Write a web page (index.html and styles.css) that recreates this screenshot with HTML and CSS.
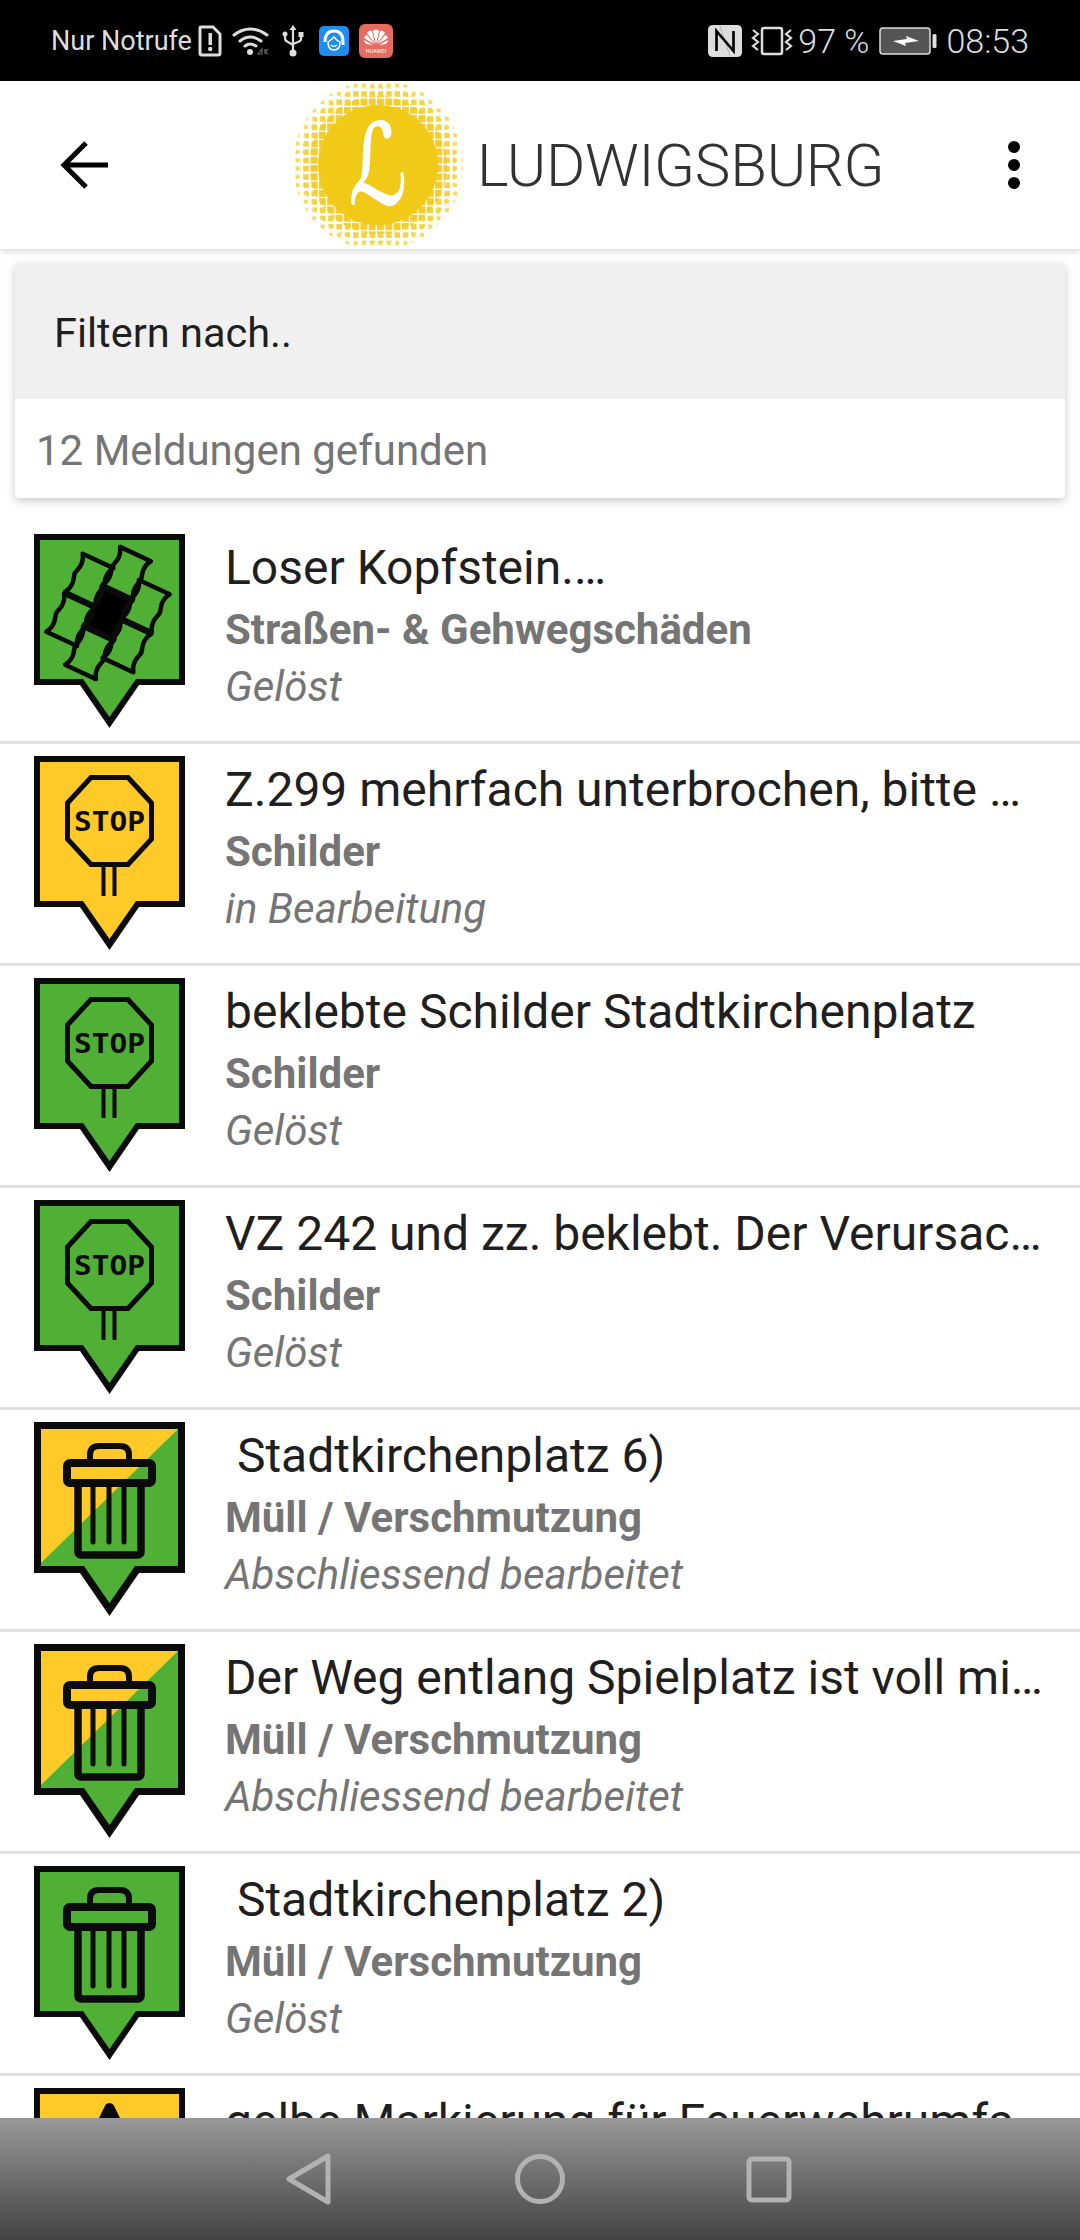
FILE: index.html
```html
<!DOCTYPE html>
<html lang="de">
<head>
    <meta charset="UTF-8">
    <meta name="viewport" content="width=device-width, initial-scale=1.0">
    <title>Meldungen</title>
    <link rel="stylesheet" href="styles.css">
</head>
<body>
    <!-- Pin-Symbole -->
    <svg class="defs" aria-hidden="true">
        <defs>
            <symbol id="pin-green" viewBox="0 0 151 194">
                <path d="M0 0H151V151H105L75.5 194L46 151H0Z" fill="#0b0b0b"/>
                <path d="M6 6H145V145H102L75.5 183L49 145H6Z" fill="#4fb035"/>
            </symbol>
            <symbol id="pin-yellow" viewBox="0 0 151 194">
                <path d="M0 0H151V151H105L75.5 194L46 151H0Z" fill="#0b0b0b"/>
                <path d="M6 6H145V145H102L75.5 183L49 145H6Z" fill="#ffca28"/>
            </symbol>
            <symbol id="pin-split" viewBox="0 0 151 194">
                <path d="M0 0H151V151H105L75.5 194L46 151H0Z" fill="#0b0b0b"/>
                <path d="M7 7H144V144H101L75.5 181L50 144H7Z" fill="#4fb035"/>
                <path d="M7 7H144L7 141Z" fill="#ffca28"/>
            </symbol>
            <symbol id="stop" viewBox="0 0 151 194">
                <path d="M57 21.500H94L117.500 47V83L94 108.500H57L33.500 83V47Z" fill="none" stroke="#0b0b0b" stroke-width="5"/>
                <text x="75.500" y="75" text-anchor="middle" font-family="DejaVu Sans Mono" font-weight="700" font-size="27" textLength="71" lengthAdjust="spacingAndGlyphs" fill="#0b0b0b">STOP</text>
                <path d="M69.500 110V140M80.500 110V140" fill="none" stroke="#0b0b0b" stroke-width="4"/>
            </symbol>
            <symbol id="trash" viewBox="0 0 151 194">
                <g fill="none" stroke="#0b0b0b">
                    <path d="M56 42V33Q56 24 65 24H86Q95 24 95 33V42" stroke-width="6"/>
                    <rect x="33" y="41" width="85" height="20" rx="3" stroke-width="8"/>
                    <rect x="44" y="61" width="63" height="72" rx="3" stroke-width="7.500"/>
                    <path d="M59 64V120M75 64V120M90 64V120" stroke-width="5" stroke-linecap="round"/>
                </g>
            </symbol>
            <path id="stone" d="M-17 -21H17Q13 -15 14 -8Q15 -4 16 0Q15 4 14 8Q13 15 17 21H-17Q-13 15 -14 8Q-15 4 -16 0Q-15 -4 -14 -8Q-13 -15 -17 -21Z"/>
            <symbol id="cobble" viewBox="0 0 151 194">
                <g transform="translate(74 79) rotate(25)" fill="none" stroke="#0b0b0b" stroke-width="4.500" stroke-linejoin="round">
                    <use href="#stone" x="0" y="-44"/>
                    <use href="#stone" x="0" y="44"/>
                    <use href="#stone" x="-31" y="-22"/>
                    <use href="#stone" x="-31" y="22"/>
                    <use href="#stone" x="31" y="-22"/>
                    <use href="#stone" x="31" y="22"/>
                    <use href="#stone" fill="#000"/>
                </g>
            </symbol>
            <pattern id="dotsLarge" width="8.300" height="8.300" patternUnits="userSpaceOnUse" x="1" y="1">
                <rect width="7" height="7" fill="#f2cd2e"/>
            </pattern>
            <pattern id="dotsMedium" width="8.300" height="8.300" patternUnits="userSpaceOnUse" x="1" y="1">
                <rect x="1" y="1" width="5.500" height="5.500" fill="#f3d445"/>
            </pattern>
            <pattern id="dotsSmall" width="8.300" height="8.300" patternUnits="userSpaceOnUse" x="1" y="1">
                <rect x="1.500" y="1.500" width="4" height="4" fill="#f5da60"/>
            </pattern>
        </defs>
    </svg>

    <!-- Statusleiste -->
    <div class="status-bar">
        <div class="status-group">
            <span class="carrier">Nur Notrufe</span>
            <svg class="ic-sim" width="24" height="32" viewBox="0 0 24 32">
                <path d="M3 2H15L22 9V28Q22 30 20 30H4Q2 30 2 28V3Q2 2 3 2Z" fill="none" stroke="#ddd" stroke-width="3"/>
                <rect x="10.500" y="8" width="3.500" height="12" fill="#ddd"/>
                <circle cx="12.200" cy="24" r="2.200" fill="#ddd"/>
            </svg>
            <svg class="ic-wifi" width="38" height="30" viewBox="0 0 38 30">
                <g fill="none" stroke="#ddd" stroke-width="3" stroke-linecap="round">
                    <path d="M2 9Q18 -3 35 9"/>
                    <path d="M8 15Q18 7 29 15"/>
                    <path d="M13 20Q18 16 24 20"/>
                </g>
                <circle cx="18" cy="26" r="3" fill="#ddd"/>
                <path d="M26 28L30 23V28ZM33 23V28M33 26L36 23M33 26L36 28" fill="none" stroke="#666" stroke-width="1.200"/>
            </svg>
            <svg class="ic-usb" width="22" height="32" viewBox="0 0 22 32">
                <g fill="none" stroke="#ddd" stroke-width="2.200">
                    <path d="M11 4V27"/>
                    <path d="M3 10V13Q3 16 6 17L11 20"/>
                    <path d="M19 11V14Q19 16 16 17L11 19"/>
                </g>
                <path d="M11 0L14.500 5H7.500Z" fill="#ddd"/>
                <circle cx="11" cy="28" r="3.500" fill="#ddd"/>
                <circle cx="3" cy="9" r="2.500" fill="#ddd"/>
                <rect x="16.500" y="7" width="5" height="5" fill="#ddd"/>
            </svg>
            <svg class="ic-app" width="30" height="30" viewBox="0 0 30 30">
                <rect width="30" height="30" rx="5" fill="#1e8df2"/>
                <path d="M6 16Q6 5 15 5T24 16V19" fill="none" stroke="#fff" stroke-width="3"/>
                <path d="M9 16Q12 14 15 11Q18 15 21 16Q21 24 15 24T9 16Z" fill="#1e8df2" stroke="#fff" stroke-width="1.500"/>
                <path d="M12 19Q15 22 18 19" fill="none" stroke="#fff" stroke-width="1.200"/>
            </svg>
            <svg class="ic-huawei" width="34" height="34" viewBox="0 0 34 34">
                <rect width="34" height="34" rx="6" fill="#e66b60"/>
                <g fill="#fff">
                    <path d="M17 20L14 7Q17 4 20 7Z"/>
                    <path d="M16 20L8 9Q10 6 13 7Z"/>
                    <path d="M18 20L26 9Q24 6 21 7Z"/>
                    <path d="M15 20L5 14Q6 11 8 11Z"/>
                    <path d="M19 20L29 14Q28 11 26 11Z"/>
                    <path d="M14 21L7 20Q5 18 5 16Z"/>
                    <path d="M20 21L27 20Q29 18 29 16Z"/>
                </g>
                <text x="17" y="29" text-anchor="middle" font-family="Roboto" font-size="5.500" fill="#fff">HUAWEI</text>
            </svg>
        </div>
        <div class="status-group">
            <svg class="ic-nfc" width="34" height="32" viewBox="0 0 32 32" preserveAspectRatio="none">
                <path d="M5 0H11L21 32H5Q0 32 0 27V5Q0 0 5 0Z" fill="#ddd"/>
                <path d="M27 32H21L11 0H27Q32 0 32 5V27Q32 32 27 32Z" fill="#ddd"/>
                <path d="M8 26V6L24 26V6" fill="none" stroke="#000" stroke-width="2.500"/>
            </svg>
            <svg class="ic-vibrate" width="42" height="30" viewBox="0 0 42 30">
                <rect x="11" y="2" width="20" height="26" rx="2" fill="none" stroke="#ddd" stroke-width="2.500"/>
                <path d="M2 4L7 8L2 12L7 16L2 20L7 24M40 4L35 8L40 12L35 16L40 20L35 24" fill="none" stroke="#ddd" stroke-width="2.200"/>
            </svg>
            <span class="status-text percent">97 %</span>
            <svg class="ic-battery" width="58" height="28" viewBox="0 0 58 28">
                <rect x="1" y="1" width="50" height="26" rx="3" fill="#555" stroke="#ddd" stroke-width="1.500"/>
                <path d="M14 14L28 12L27 9L40 14L26 16L27 19Z" fill="#fff"/>
                <rect x="53.500" y="7" width="4" height="14" rx="1.500" fill="#ddd"/>
            </svg>
            <span class="status-text">08:53</span>
        </div>
    </div>

    <!-- Kopfzeile -->
    <header class="app-bar">
        <svg class="back" width="48" height="48" viewBox="0 0 48 48">
            <path d="M48 24H4M26 2L4 24L26 46" fill="none" stroke="#000" stroke-width="5"/>
        </svg>
        <div class="logo">
            <svg class="logo-mark" width="170" height="168" viewBox="0 0 170 168">
                <circle cx="85" cy="84" r="85" fill="url(#dotsSmall)"/>
                <circle cx="85" cy="84" r="78" fill="url(#dotsMedium)"/>
                <circle cx="85" cy="84" r="69" fill="url(#dotsLarge)"/>
                <circle cx="85" cy="84" r="60" fill="#f1ca17"/>
                <text transform="translate(85 123) scale(0.72 1)" text-anchor="middle" font-family="DejaVu Sans" font-size="112" fill="#fff" stroke="#fff" stroke-width="1.500">ℒ</text>
            </svg>
            <span class="logo-text">LUDWIGSBURG</span>
        </div>
        <div class="menu">
            <span class="menu-dot"></span>
            <span class="menu-dot"></span>
            <span class="menu-dot"></span>
        </div>
    </header>

    <main class="content">
        <section class="filter-card">
            <div class="filter-field">Filtern nach..</div>
            <div class="result-count">12 Meldungen gefunden</div>
        </section>

        <ul class="report-list">
            <li class="report">
                <svg class="pin" width="151" height="194"><use href="#pin-green"/><use href="#cobble"/></svg>
                <div class="report-text">
                    <div class="report-title">Loser Kopfstein.…</div>
                    <div class="report-category">Straßen- &amp; Gehwegschäden</div>
                    <div class="report-state">Gelöst</div>
                </div>
            </li>
            <li class="report">
                <svg class="pin" width="151" height="194"><use href="#pin-yellow"/><use href="#stop"/></svg>
                <div class="report-text">
                    <div class="report-title">Z.299 mehrfach unterbrochen, bitte Markierung erneuern</div>
                    <div class="report-category">Schilder</div>
                    <div class="report-state">in Bearbeitung</div>
                </div>
            </li>
            <li class="report">
                <svg class="pin" width="151" height="194"><use href="#pin-green"/><use href="#stop"/></svg>
                <div class="report-text">
                    <div class="report-title">beklebte Schilder Stadtkirchenplatz</div>
                    <div class="report-category">Schilder</div>
                    <div class="report-state">Gelöst</div>
                </div>
            </li>
            <li class="report">
                <svg class="pin" width="151" height="194"><use href="#pin-green"/><use href="#stop"/></svg>
                <div class="report-text">
                    <div class="report-title">VZ 242 und zz. beklebt. Der Verursacher ist bekannt</div>
                    <div class="report-category">Schilder</div>
                    <div class="report-state">Gelöst</div>
                </div>
            </li>
            <li class="report">
                <svg class="pin" width="151" height="194"><use href="#pin-split"/><use href="#trash"/></svg>
                <div class="report-text">
                    <div class="report-title"> Stadtkirchenplatz 6)</div>
                    <div class="report-category">Müll / Verschmutzung</div>
                    <div class="report-state">Abschliessend bearbeitet</div>
                </div>
            </li>
            <li class="report">
                <svg class="pin" width="151" height="194"><use href="#pin-split"/><use href="#trash"/></svg>
                <div class="report-text">
                    <div class="report-title">Der Weg entlang Spielplatz ist voll mit Müll</div>
                    <div class="report-category">Müll / Verschmutzung</div>
                    <div class="report-state">Abschliessend bearbeitet</div>
                </div>
            </li>
            <li class="report">
                <svg class="pin" width="151" height="194"><use href="#pin-green"/><use href="#trash"/></svg>
                <div class="report-text">
                    <div class="report-title"> Stadtkirchenplatz 2)</div>
                    <div class="report-category">Müll / Verschmutzung</div>
                    <div class="report-state">Gelöst</div>
                </div>
            </li>
            <li class="report">
                <svg class="pin" width="151" height="194">
                    <use href="#pin-yellow"/>
                    <path d="M75.500 20L110 90H41Z" fill="#0b0b0b" stroke="#0b0b0b" stroke-width="10" stroke-linejoin="round"/>
                </svg>
                <div class="report-text">
                    <div class="report-title">gelbe Markierung für Feuerwehrumfahrt</div>
                </div>
            </li>
        </ul>
    </main>

    <!-- Navigationsleiste -->
    <nav class="nav-bar">
        <svg width="60" height="60" viewBox="0 0 60 60">
            <path d="M9 30L48 7V53Z" fill="none" stroke="#b2b2b2" stroke-width="5" stroke-linejoin="round"/>
        </svg>
        <svg width="60" height="60" viewBox="0 0 60 60">
            <circle cx="30" cy="30" r="22.500" fill="none" stroke="#b2b2b2" stroke-width="5"/>
        </svg>
        <svg width="60" height="60" viewBox="0 0 60 60">
            <rect x="9" y="10" width="40" height="41" rx="3" fill="none" stroke="#b2b2b2" stroke-width="5"/>
        </svg>
    </nav>
</body>
</html>
```

FILE: styles.css
```css
* {
    margin: 0;
    padding: 0;
    box-sizing: border-box;
}

html, body {
    height: 2240px;
}

body {
    display: flex;
    flex-direction: column;
    overflow: hidden;
    background: white;
    font-family: Roboto, sans-serif;
    color: #1f1f1f;
}

.defs {
    display: block;
    width: 0;
    height: 0;
    overflow: hidden;
    flex: none;
}

/* Statusleiste */
.status-bar {
    height: 81px;
    flex: none;
    display: flex;
    align-items: center;
    justify-content: space-between;
    padding: 0 51px 0 51px;
    background: black;
    color: #ddd;
}

.status-group {
    display: flex;
    align-items: center;
}

.carrier {
    font-size: 27px;
}

.status-text {
    font-size: 34px;
    font-weight: 300;
}

.ic-sim { margin-left: 6px; }
.ic-wifi { margin-left: 10px; }
.ic-usb { margin-left: 12px; }
.ic-app { margin-left: 15px; }
.ic-huawei { margin-left: 10px; }
.ic-vibrate { margin-left: 9px; }
.percent { margin-left: 5px; }
.ic-battery { margin: 0 9px 0 10px; }

/* Kopfzeile */
.app-bar {
    position: relative;
    z-index: 2;
    height: 168px;
    flex: none;
    display: flex;
    align-items: center;
    padding: 0 60px;
    background: white;
    box-shadow: 0 3px 6px rgba(0,0,0,0.14);
}

.logo {
    display: flex;
    align-items: center;
    margin-left: 185px;
}

.logo-mark {
    display: block;
}

.logo-text {
    margin-left: 14px;
    font-size: 60px;
    font-weight: 300;
    letter-spacing: -0.3px;
    color: #333;
    filter: blur(0.6px);
}

.menu {
    margin-left: auto;
    display: flex;
    flex-direction: column;
    gap: 6px;
}

.menu-dot {
    width: 12px;
    height: 12px;
    border-radius: 50%;
    background: black;
}

/* Inhalt */
.content {
    flex: 1;
    min-height: 0;
    overflow: hidden;
    padding-top: 14px;
}

.filter-card {
    margin: 0 15px 24px;
    border-radius: 4px;
    background: white;
    box-shadow: 0 3px 10px rgba(0,0,0,0.22);
    overflow: hidden;
}

.filter-field {
    height: 136px;
    padding: 3px 39px 0;
    display: flex;
    align-items: center;
    background: #f0f0f0;
    font-size: 41.5px;
}

.result-count {
    height: 99px;
    padding: 3px 21px 0;
    display: flex;
    align-items: center;
    font-size: 42px;
    color: #757575;
}

.report-list {
    list-style: none;
}

.report {
    height: 222px;
    display: flex;
    gap: 40px;
    padding: 12px 30px 0 34px;
    border-bottom: 3px solid #e0e0e0;
}

.pin {
    flex: none;
}

.report-text {
    flex: 1;
    min-width: 0;
    padding-top: 3px;
}

.report-title {
    font-size: 48px;
    line-height: 61px;
    margin-bottom: 3px;
    white-space: pre;
    overflow: hidden;
    text-overflow: ellipsis;
}

.report-category {
    font-size: 42px;
    font-weight: 700;
    line-height: 58px;
    color: #757575;
}

.report-state {
    font-size: 42px;
    font-style: italic;
    line-height: 56px;
    color: #757575;
}

/* Navigationsleiste */
.nav-bar {
    position: relative;
    z-index: 2;
    height: 122px;
    flex: none;
    display: flex;
    align-items: center;
    justify-content: center;
    gap: 170px;
    background: linear-gradient(#989898, #434343);
}
```
